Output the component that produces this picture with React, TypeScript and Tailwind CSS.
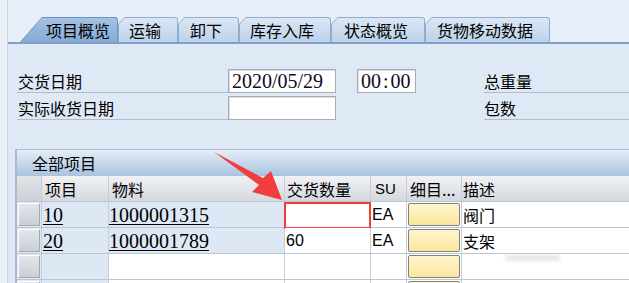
import React from "react";

type Tab = { label: string; w: string; pl: string };

const tabs: Tab[] = [
  { label: "运输", w: "w-[60px]", pl: "pl-[11px]" },
  { label: "卸下", w: "w-[61px]", pl: "pl-[12px]" },
  { label: "库存入库", w: "w-[92px]", pl: "pl-[11px]" },
  { label: "状态概览", w: "w-[94px]", pl: "pl-[13px]" },
  { label: "货物移动数据", w: "w-[125px]", pl: "pl-[12px]" },
];

type Row = {
  item: string;
  material: string;
  qty: string;
  su: string;
  desc: string;
  marked?: boolean;
};

const rows: Row[] = [
  { item: "10", material: "1000001315", qty: "", su: "EA", desc: "阀门", marked: true },
  { item: "20", material: "1000001789", qty: "60", su: "EA", desc: "支架" },
  { item: "", material: "", qty: "", su: "", desc: "" },
  { item: "", material: "", qty: "", su: "", desc: "" },
];

const serif = "font-['Liberation_Serif',serif] text-[20px] leading-none";
const sans = "font-['Liberation_Sans',sans-serif] text-[16px] leading-none";
const cell = "h-full flex items-center border-r border-[#c3cedb] shrink-0";

function FormRow({
  label,
  right,
  children,
}: {
  label: string;
  right: string;
  children: React.ReactNode;
}) {
  return (
    <div className="flex h-[24px]">
      <div className="w-[211px] shrink-0 border-b border-[#b3bbc5] flex items-center pl-px leading-none">
        {label}
      </div>
      <div className="w-[256px] shrink-0 flex">{children}</div>
      <div className="flex-1 border-b border-[#b3bbc5] flex items-center leading-none">
        {right}
      </div>
    </div>
  );
}

function Field({ children, w, ml = "" }: { children?: React.ReactNode; w: string; ml?: string }) {
  return (
    <div
      className={`${w} ${ml} h-[24px] bg-white border border-[#a7adb4] shadow-[inset_1px_1px_0_#d9dde2] flex items-center pl-[3px] text-[#0b0b24] ${serif}`}
    >
      {children}
    </div>
  );
}

export default function App() {
  return (
    <div className="relative w-[629px] h-[283px] overflow-hidden bg-[#eaf0f8] text-black text-[16px] font-['Noto_Sans_CJK_SC',sans-serif]">
      <div className="ml-[7px] h-full border-l border-[#c8d4e2] bg-[#e6eef7] flex flex-col">
        {/* tab strip */}
        <div className="flex items-end h-[42px] pl-[12px] shrink-0">
          <div className="relative h-[25px] w-[98px] rounded-tr-[3px] bg-[#6f94c2] [clip-path:polygon(22px_0,100%_0,100%_100%,0_100%)]">
            <div className="absolute top-px left-px right-px bottom-0 rounded-tr-[2px] bg-gradient-to-b from-[#a3c1e3] to-[#86abd7] [clip-path:polygon(21px_0,100%_0,100%_100%,0_100%)]" />
            <span className="relative h-full flex items-center pl-[26px] leading-none">项目概览</span>
          </div>
          {tabs.map((t) => (
            <div
              key={t.label}
              className={`relative h-[25px] ${t.w} rounded-tr-[3px] bg-[#91acce] [clip-path:polygon(7px_0,100%_0,100%_100%,0_100%,0_7px)]`}
            >
              <div className="absolute top-px left-px right-px bottom-0 rounded-tr-[2px] bg-gradient-to-b from-[#dbe7f4] to-[#bcd2ea] [clip-path:polygon(6px_0,100%_0,100%_100%,0_100%,0_6px)]" />
              <span className={`relative h-full flex items-center ${t.pl} leading-none`}>
                {t.label}
              </span>
            </div>
          ))}
        </div>

        {/* panel */}
        <div className="flex-1 bg-[#dfe9f5] border-t-2 border-[#7e9fc8]">
          <div className="pt-[25px] pl-[9px] flex flex-col gap-[3px]">
            <FormRow label="交货日期" right="总重量">
              <Field w="w-[108px]">2020/05/29</Field>
              <Field w="w-[59px]" ml="ml-[21px]">
                00<span className="px-[2px]">:</span>00
              </Field>
            </FormRow>
            <FormRow label="实际收货日期" right="包数">
              <Field w="w-[108px]" />
            </FormRow>
          </div>

          {/* item table */}
          <div className="ml-[7px] mt-[29px] border-l-2 border-t border-[#a9bbd1]">
            <div className="h-[26px] flex items-center pl-[15px] leading-none bg-gradient-to-b from-[#e6edf6] to-[#a9c3e0]">
              全部项目
            </div>
            <div className="flex h-[26px] border-b border-[#b9c4d1] bg-gradient-to-b from-[#f1f2f4] to-[#d4d8de] leading-none">
              <div className={`${cell} w-[25px] bg-gradient-to-b from-[#e2e4e8] to-[#cdd1d7]`} />
              <div className={`${cell} w-[67px] pl-[3px]`}>项目</div>
              <div className={`${cell} w-[176px] pl-[3px]`}>物料</div>
              <div className={`${cell} w-[86px] pl-[2px]`}>交货数量</div>
              <div className={`${cell} w-[36px] pl-[4px] font-['Liberation_Sans',sans-serif] text-[15px]`}>SU</div>
              <div className={`${cell} w-[55px] pl-[3px]`}>细目...</div>
              <div className="h-full flex-1 flex items-center pl-px">描述</div>
            </div>

            {rows.map((r, i) => (
              <div key={i} className="flex h-[26px] border-b border-[#b9c6d6] leading-none">
                <div className={`${cell} w-[25px] p-px bg-[#dfe9f5]`}>
                  <div className="h-full w-full border border-t-white border-l-white border-r-[#a3a9b1] border-b-[#a3a9b1] bg-gradient-to-b from-[#e4e6ea] to-[#caced4]" />
                </div>
                <div className={`${cell} w-[67px] pl-px bg-[#dde8f4] ${serif}`}>
                  {r.item && <span className="underline decoration-1 underline-offset-2">{r.item}</span>}
                </div>
                <div className={`${cell} w-[176px] ${r.item ? "bg-[#dde8f4]" : "bg-white"} ${serif}`}>
                  {r.material && (
                    <span className="underline decoration-1 underline-offset-2">{r.material}</span>
                  )}
                </div>
                <div className={`${cell} relative w-[86px] pl-px bg-white ${sans}`}>
                  {r.qty}
                  {r.marked && (
                    <div className="absolute -left-px -right-px top-0 -bottom-[2px] border-2 border-[#f23d3d]" />
                  )}
                </div>
                <div className={`${cell} w-[36px] pl-px bg-white ${sans}`}>{r.su}</div>
                <div className={`${cell} w-[55px] p-px bg-white`}>
                  <div className="h-full w-full rounded-[2px] border border-[#7f8082] bg-gradient-to-b from-[#fff6cf] to-[#fce69c]" />
                </div>
                <div className="h-full flex-1 flex items-center pl-px bg-white">{r.desc}</div>
              </div>
            ))}
          </div>
        </div>
      </div>

      {/* annotation arrow */}
      <svg className="absolute inset-0 pointer-events-none" width="629" height="283" viewBox="0 0 629 283">
        <polygon points="214,152 263,178 271,171 282,200 252,192 259,185" fill="#f23d3d" />
      </svg>
      <div className="absolute left-[505px] top-[256px] w-[55px] h-[4px] rounded-full bg-[#c8ccd2] blur-[2px] opacity-70" />
    </div>
  );
}
